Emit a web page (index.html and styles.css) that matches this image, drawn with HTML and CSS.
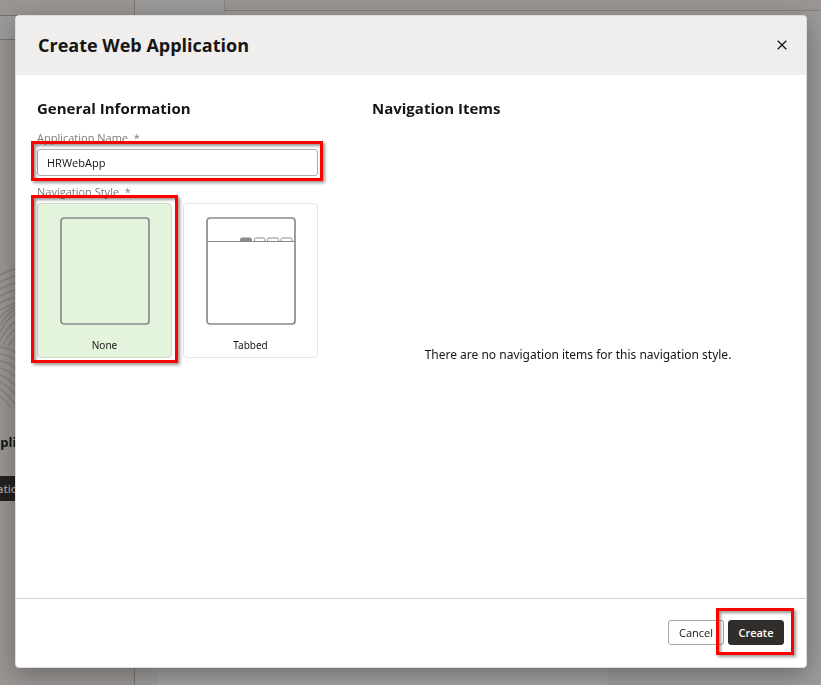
FILE: index.html
```html
<!DOCTYPE html>
<html lang="en">
<head>
<meta charset="utf-8">
<meta name="viewport" content="width=device-width, initial-scale=1">
<title>Create Web Application</title>
<link rel="stylesheet" href="styles.css">
</head>
<body>
<div class="workspace" aria-hidden="true">
  <div class="side">
    <div class="side-top"></div>
    <div class="side-tabs"></div>
    <div class="side-body">
      <svg class="waves" width="24" height="142" viewBox="0 0 24 142" fill="none" stroke="#858280" stroke-width="1.5">
        <path d="M0 7Q9 2 20 0M0 14Q9 9 20 7M0 21Q9 16 20 14M0 28Q9 23 20 21M0 35Q9 30 20 28M0 42Q9 37 20 33M0 49Q8 40 20 36M0 57Q7 45 20 38M0 65Q6 50 20 43M0 73Q6 59 20 50M3 77Q8 66 20 57M8 78Q12 72 20 66M0 79Q12 80 20 88M0 86Q12 87 20 96M0 93Q12 95 20 105M0 100Q12 103 20 114M0 107Q11 111 20 123M0 114Q10 119 20 132M0 121Q9 127 18 140M0 128Q6 132 11 139"/>
      </svg>
      <div class="side-title">ppli</div>
      <div class="side-action">atio</div>
    </div>
  </div>
  <div class="main">
    <div class="main-top"></div>
    <div class="main-panel"></div>
  </div>
</div>

<div class="dialog" role="dialog" aria-labelledby="dialog-title">
  <header class="dialog-header">
    <h1 id="dialog-title">Create Web Application</h1>
    <button class="close" type="button" aria-label="Close">
      <svg width="10" height="10" viewBox="0 0 10 10" fill="none" stroke="#161513" stroke-width="1.3"><path d="M.7.7l8.6 8.6M9.3.7L.7 9.3"/></svg>
    </button>
  </header>
  <form class="dialog-form">
    <div class="dialog-body">
      <section class="general">
        <h2>General Information</h2>
        <label class="label" for="app-name">Application Name&nbsp; *</label>
        <div class="marked">
          <input class="text-input" id="app-name" type="text" value="HRWebApp" required>
          <span class="mark mark-field"></span>
        </div>
        <div class="label" id="style-label">Navigation Style&nbsp; *</div>
        <div class="cards" role="radiogroup" aria-labelledby="style-label">
          <div class="marked">
            <label class="card">
              <input type="radio" name="nav-style" checked>
              <svg width="90" height="108" viewBox="0 0 90 108" fill="none" stroke="#868c8c" stroke-width="1.7"><rect x="1" y="1" width="88" height="106" rx="3"/></svg>
              <span>None</span>
            </label>
            <span class="mark mark-card"></span>
          </div>
          <label class="card">
            <input type="radio" name="nav-style">
            <svg width="90" height="108" viewBox="0 0 90 108" fill="none" stroke="#868c8c"><rect x="1" y="1" width="88" height="106" rx="3" stroke-width="1.7"/><path d="M1 24.5h88"/><path fill="#868c8c" d="M34.5 24.5v-2q0-1.500 1.500-1.500h8q1.500 0 1.500 1.500v2z"/><path fill="#fff" d="M48.500 24.500v-2q0-1.500 1.500-1.500h7.500q1.500 0 1.500 1.500v2zM61.500 24.500v-2q0-1.500 1.500-1.500h8q1.500 0 1.500 1.500v2zM75 24.500v-2q0-1.500 1.500-1.500h8q1.500 0 1.500 1.500v2z"/></svg>
            <span>Tabbed</span>
          </label>
        </div>
      </section>
      <section class="items">
        <h2>Navigation Items</h2>
        <p class="empty">There are no navigation items for this navigation style.</p>
      </section>
    </div>
    <footer class="dialog-footer">
      <button class="btn" type="button">Cancel</button>
      <div class="marked">
        <button class="btn btn-primary" type="button">Create</button>
        <span class="mark mark-button"></span>
      </div>
    </footer>
  </form>
</div>
</body>
</html>
```
FILE: styles.css
```css
* { box-sizing: border-box; }

body {
  margin: 0;
  height: 100vh;
  overflow: hidden;
  font-family: "Open Sans", "Noto Sans", sans-serif;
  font-size: 11px;
  color: #161513;
  background: #9c9b99;
}

h1, h2, p { margin: 0; }

.workspace {
  display: flex;
  height: 100vh;
}

.side {
  display: flex;
  flex-direction: column;
  width: 135px;
  border-right: 1px solid #767372;
  background: #9b9694;
}

.side-top {
  height: 16px;
  border-bottom: 1px solid #767372;
}

.side-tabs {
  height: 24px;
  border-bottom: 1px solid #767372;
  background: #9c9c9a;
}

.side-body { overflow: hidden; }

.waves {
  display: block;
  margin-top: 228px;
}

.side-title {
  margin-top: 20px;
  text-indent: -8px;
  font-size: 13px;
  font-weight: 700;
  line-height: 24px;
}

.side-action {
  margin-top: 22px;
  text-indent: -3px;
  font-weight: 600;
  line-height: 25px;
  color: #a5a3a1;
  background: #24211f;
}

.main {
  display: flex;
  flex: 1;
  flex-direction: column;
}

.main-top {
  height: 11px;
  margin-left: 89px;
  border-bottom: 1px solid #858280;
  border-left: 1px solid #858280;
  background: #9b9694;
}

.main-panel {
  flex: 1;
  margin: 60px 214px 0 23px;
  background: #a0a0a0;
}

.dialog {
  position: fixed;
  inset: 15px 14px 17px 15px;
  display: flex;
  flex-direction: column;
  border: 1px solid #dedddb;
  border-radius: 4px;
  background: #fff;
  box-shadow: 0 6px 24px rgba(0, 0, 0, 0.32);
}

.dialog-header {
  display: flex;
  align-items: center;
  justify-content: space-between;
  height: 59px;
  padding: 0 14px 2px 22px;
  border-radius: 3px 3px 0 0;
  background: #f0eeec;
}

h1 {
  font-size: 18px;
  font-weight: 700;
  line-height: 24px;
}

h2 {
  font-size: 15px;
  font-weight: 700;
  line-height: 24px;
}

.close {
  display: flex;
  padding: 5px;
  border: 0;
  background: none;
}

.dialog-form {
  display: flex;
  flex: 1;
  flex-direction: column;
}

.dialog-body {
  display: flex;
  flex: 1;
  gap: 54px;
  padding: 21px 22px 0 21px;
}

.general { width: 281px; }

.items {
  display: flex;
  flex: 1;
  flex-direction: column;
}

.label {
  display: block;
  margin: 10px 0 3px;
  line-height: 16px;
  color: #7c7a78;
}

.marked + .label { margin-top: 8px; }

.marked { position: relative; }

.text-input {
  display: block;
  width: 100%;
  height: 27px;
  padding: 0 9px;
  border: 1px solid #aeacaa;
  border-radius: 3px;
  font: inherit;
  color: inherit;
  background: #fff;
}

.cards {
  display: grid;
  grid-template-columns: 1fr 1fr;
  gap: 11px;
}

.card {
  display: flex;
  flex-direction: column;
  align-items: center;
  gap: 12px;
  height: 155px;
  padding-top: 13px;
  border: 1px solid #e4e3e1;
  border-radius: 4px;
  font-family: "Noto Sans", "Open Sans", sans-serif;
  font-size: 10px;
  line-height: 16px;
}

.card:has(input:checked) {
  border-color: #c9dbc1;
  background: #e4f3dc;
}

.card input {
  position: absolute;
  appearance: none;
  margin: 0;
}

.empty {
  margin: auto;
  padding-bottom: 8px;
  font-family: "Noto Sans", "Open Sans", sans-serif;
  font-size: 12px;
  line-height: 20px;
}

.dialog-footer {
  display: flex;
  gap: 4px;
  align-items: center;
  justify-content: flex-end;
  height: 69px;
  padding: 0 22px 2px;
  border-top: 1px solid #d2d0cd;
}

.btn {
  display: block;
  width: 56px;
  height: 25px;
  padding: 0;
  border: 1px solid #aaa8a6;
  border-radius: 3px;
  font: inherit;
  font-weight: 500;
  color: #161513;
  background: #fff;
}

.btn-primary {
  border-color: #312d2a;
  font-weight: 600;
  color: #fff;
  background: #312d2a;
}

.mark {
  position: absolute;
  z-index: 1;
  border: 3px solid #f00;
  box-shadow: 2px 2px 3px rgba(0, 0, 0, 0.4), inset 2px 2px 3px rgba(0, 0, 0, 0.4);
  pointer-events: none;
}

.mark-field { inset: -8px -5px -5px -6px; }
.mark-card { inset: -8px -6px -5px -6px; }
.mark-button { inset: -12px -10px -10px -12px; }
```
